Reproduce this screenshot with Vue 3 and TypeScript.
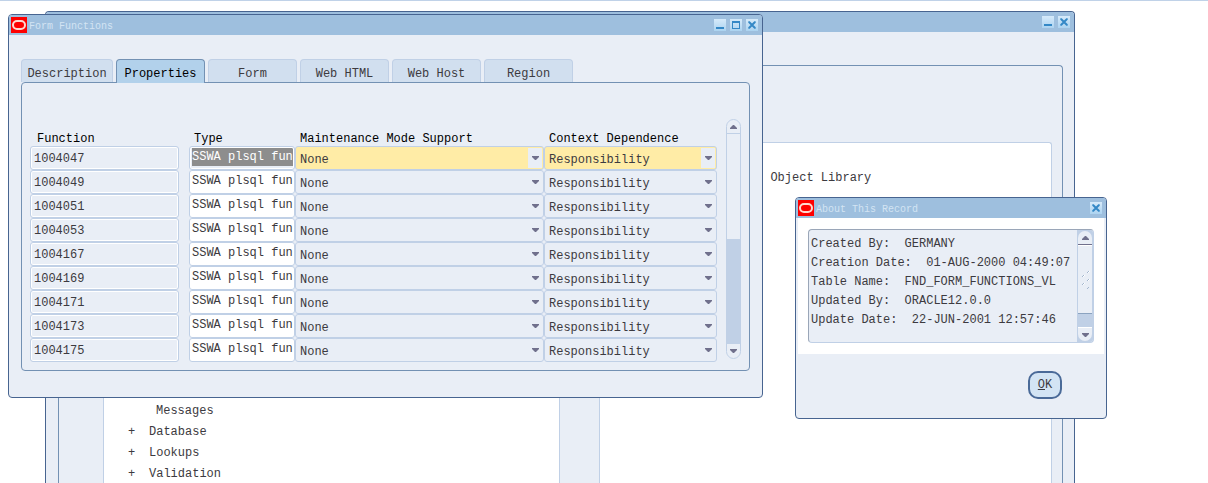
<script setup lang="ts">
import { ref } from 'vue'

interface FunctionRow {
  id: string
  type: string
  maintenance: string
  context: string
}

const tabs: string[] = ['Description', 'Properties', 'Form', 'Web HTML', 'Web Host', 'Region']
const activeTab = ref('Properties')

const ids: string[] = [
  '1004047', '1004049', '1004051', '1004053', '1004167',
  '1004169', '1004171', '1004173', '1004175',
]
const rows = ref<FunctionRow[]>(
  ids.map((id) => ({
    id,
    type: 'SSWA plsql function',
    maintenance: 'None',
    context: 'Responsibility',
  })),
)

const treeItems: { label: string; branch: boolean }[] = [
  { label: 'Messages', branch: false },
  { label: 'Database', branch: true },
  { label: 'Lookups', branch: true },
  { label: 'Validation', branch: true },
]

const recordInfo: string = [
  'Created By:  GERMANY',
  'Creation Date:  01-AUG-2000 04:49:07',
  'Table Name:  FND_FORM_FUNCTIONS_VL',
  'Updated By:  ORACLE12.0.0',
  'Update Date:  22-JUN-2001 12:57:46',
].join('\n')
</script>

<template>
  <main class="desktop">
    <section class="window navigator" aria-label="Navigator">
      <header class="titlebar">
        <span class="title"></span>
        <button class="winbtn" type="button" aria-label="Minimize">
          <svg viewBox="0 0 12 12"><path d="M2 8h8v2H2z" fill="#3488c6" /></svg>
        </button>
        <button class="winbtn" type="button" aria-label="Close">
          <svg viewBox="0 0 12 12"><path d="M3 3l6 6M9 3l-6 6" stroke="#3488c6" stroke-width="2" fill="none" /><path d="M2 3h2M8 3h2M2 9h2M8 9h2" stroke="#3488c6" fill="none" /></svg>
        </button>
      </header>
      <div class="nav-panel">
        <div class="pane tree-pane">
          <ul class="tree">
            <li v-for="item in treeItems" :key="item.label" :class="{ leaf: !item.branch }">
              <span v-if="item.branch" class="plus">+</span>{{ item.label }}
            </li>
          </ul>
        </div>
        <div class="pane detail-pane">Application Object Library</div>
      </div>
    </section>

    <section class="window functions" aria-label="Form Functions">
      <header class="titlebar">
        <svg class="logo" viewBox="0 0 16 16">
          <rect width="16" height="16" fill="#fe0000" />
          <rect x="2" y="4" width="12" height="8" rx="4" fill="none" stroke="#ffd8d0" stroke-width="2" />
        </svg>
        <span class="title">Form Functions</span>
        <button class="winbtn" type="button" aria-label="Minimize">
          <svg viewBox="0 0 12 12"><path d="M2 8h8v2H2z" fill="#3488c6" /></svg>
        </button>
        <button class="winbtn" type="button" aria-label="Maximize">
          <svg viewBox="0 0 12 12"><path d="M2 2h8v8H2zM3 4v5h6V4z" fill="#3488c6" fill-rule="evenodd" /></svg>
        </button>
        <button class="winbtn" type="button" aria-label="Close">
          <svg viewBox="0 0 12 12"><path d="M3 3l6 6M9 3l-6 6" stroke="#3488c6" stroke-width="2" fill="none" /><path d="M2 3h2M8 3h2M2 9h2M8 9h2" stroke="#3488c6" fill="none" /></svg>
        </button>
      </header>

      <div class="body">
        <nav class="tabs" role="tablist">
          <button
            v-for="tab in tabs"
            :key="tab"
            type="button"
            role="tab"
            class="tab"
            :class="{ active: tab === activeTab }"
            :aria-selected="tab === activeTab"
            @click="activeTab = tab"
          >{{ tab }}</button>
        </nav>

        <div class="panel">
          <table class="grid">
            <colgroup>
              <col class="c-function" />
              <col class="c-type" />
              <col />
              <col class="c-context" />
            </colgroup>
            <thead>
              <tr>
                <th class="h-function">Function</th>
                <th>Type</th>
                <th>Maintenance Mode Support</th>
                <th>Context Dependence</th>
              </tr>
            </thead>
            <tbody>
              <tr v-for="(row, i) in rows" :key="row.id" :class="{ current: i === 0 }">
                <td class="d-function">
                  <input class="cell fn" type="text" readonly :value="row.id" aria-label="Function" />
                </td>
                <td>
                  <input v-model="row.type" class="cell type" type="text" aria-label="Type" />
                </td>
                <td>
                  <div class="cell combo">
                    <select v-model="row.maintenance" aria-label="Maintenance Mode Support">
                      <option>None</option>
                    </select>
                    <span class="drop"><svg viewBox="0 0 7 4"><path d="M0 0h7v1L4 4H3L0 1z" fill="#70708c" /></svg></span>
                  </div>
                </td>
                <td>
                  <div class="cell combo">
                    <select v-model="row.context" aria-label="Context Dependence">
                      <option>Responsibility</option>
                    </select>
                    <span class="drop"><svg viewBox="0 0 7 4"><path d="M0 0h7v1L4 4H3L0 1z" fill="#70708c" /></svg></span>
                  </div>
                </td>
              </tr>
            </tbody>
          </table>
          <div class="scroll">
            <button type="button" class="up" aria-label="Scroll up">
              <svg viewBox="0 0 7 4"><path d="M0 4V3L3 0h1l3 3v1z" fill="#70708c" /></svg>
            </button>
            <div class="thumb"></div>
            <div class="track"></div>
            <button type="button" class="down" aria-label="Scroll down">
              <svg viewBox="0 0 7 4"><path d="M0 0h7v1L4 4H3L0 1z" fill="#70708c" /></svg>
            </button>
          </div>
        </div>
      </div>
    </section>

    <section class="window about" role="dialog" aria-label="About This Record">
      <header class="titlebar">
        <svg class="logo" viewBox="0 0 16 16">
          <rect width="16" height="16" fill="#fe0000" />
          <rect x="2" y="4" width="12" height="8" rx="4" fill="none" stroke="#ffd8d0" stroke-width="2" />
        </svg>
        <span class="title">About This Record</span>
        <button class="winbtn" type="button" aria-label="Close">
          <svg viewBox="0 0 12 12"><path d="M3 3l6 6M9 3l-6 6" stroke="#3488c6" stroke-width="2" fill="none" /><path d="M2 3h2M8 3h2M2 9h2M8 9h2" stroke="#3488c6" fill="none" /></svg>
        </button>
      </header>
      <div class="message">
        <div class="record">
          <textarea readonly rows="5" aria-label="Record details" :value="recordInfo"></textarea>
          <div class="record-scroll">
            <button type="button" class="up" aria-label="Scroll up">
              <svg viewBox="0 0 7 4"><path d="M0 4V3L3 0h1l3 3v1z" fill="#70708c" /></svg>
            </button>
            <div class="thumb">
              <svg class="grip" viewBox="0 0 9 19">
                <path d="M6 3l2-2M1 7l2-2M6 11l2-2M1 15l2-2M6 19l2-2" stroke="#a3b6ce" fill="none" />
                <path d="M7 3l2-2M2 7l2-2M7 11l2-2M2 15l2-2" stroke="#ffffff" fill="none" />
              </svg>
            </div>
            <div class="track"></div>
            <button type="button" class="down" aria-label="Scroll down">
              <svg viewBox="0 0 7 4"><path d="M0 0h7v1L4 4H3L0 1z" fill="#70708c" /></svg>
            </button>
          </div>
        </div>
      </div>
      <footer class="actions">
        <button type="button" class="ok"><u>O</u>K</button>
      </footer>
    </section>
  </main>
</template>

<style>
body {
  margin: 0;
  background: #ffffff;
}
</style>

<style scoped>
.desktop {
  position: relative;
  box-sizing: border-box;
  min-height: 100vh;
  overflow: hidden;
  border-top: 1px solid #c0d2e8;
  background: #ffffff;
  color: #3c3a40;
  font: 12px/16px "Liberation Mono", monospace;
}

button,
input,
select,
textarea {
  box-sizing: border-box;
  margin: 0;
  padding: 0;
  border: 0;
  border-radius: 0;
  outline: 0;
  background: transparent;
  color: inherit;
  font: inherit;
}

svg {
  display: block;
}

.window {
  position: absolute;
  box-sizing: border-box;
  border: 1px solid #476490;
  border-radius: 4px;
  background: #e9eef6;
  overflow: hidden;
}

.navigator {
  top: 10px;
  right: 133px;
  bottom: 0;
  left: 45px;
  display: flex;
  flex-direction: column;
  border-bottom: 0;
  border-radius: 4px 4px 0 0;
}

.functions {
  top: 13px;
  right: 445px;
  left: 8px;
}

.about {
  top: 196px;
  right: 101px;
  width: 312px;
}

.titlebar {
  display: flex;
  align-items: center;
  flex: none;
  box-sizing: border-box;
  height: 20px;
  gap: 4px;
  padding: 0 4px 0 2px;
  background: #9ebfde;
}

.logo {
  flex: none;
  width: 16px;
  height: 16px;
}

.title {
  flex: 1;
  margin-left: -2px;
  padding-top: 4px;
  color: #d3e4f3;
  font-size: 10px;
}

.winbtn {
  width: 12px;
  height: 12px;
  background: linear-gradient(#d6eafa, #acd3f0);
}

.nav-panel {
  display: grid;
  flex: 1;
  grid-template-columns: 457fr 453fr;
  gap: 39px;
  box-sizing: border-box;
  margin: 33px 11px 0 12px;
  padding: 76px 10px 0 44px;
  border: 1px solid #7391b3;
  border-bottom: 0;
  border-radius: 4px 4px 0 0;
}

.pane {
  box-sizing: border-box;
  min-width: 0;
  border: 1px solid #c0d0e6;
  border-bottom: 0;
  border-radius: 3px 3px 0 0;
  background: #ffffff;
}

.tree-pane {
  padding: 258px 0 0 24px;
}

.detail-pane {
  padding: 27px 0 0 84px;
}

.tree {
  margin: 0;
  padding: 0;
  list-style: none;
  line-height: 21px;
}

.tree li {
  display: flex;
}

.tree .leaf {
  padding-left: 28px;
}

.plus {
  width: 21px;
}

.body {
  padding: 24px 12px 26px;
}

.tabs {
  display: flex;
  gap: 3px;
}

.tab {
  flex: none;
  width: 89px;
  height: 23px;
  padding-top: 5px;
  border: 1px solid #c0d0e6;
  border-bottom: 0;
  border-radius: 4px 4px 0 0;
  background: #d1dfef;
}

.tab:first-child {
  width: 92px;
}

.tab.active {
  z-index: 1;
  height: 24px;
  margin-bottom: -1px;
  padding-top: 4px;
  border-color: #7391b3;
  background: #b2d1eb;
  color: #000000;
}

.panel {
  display: flex;
  gap: 9px;
  padding: 36px 8px 8px;
  border: 1px solid #7391b3;
  border-radius: 4px;
}

.grid {
  flex: 1;
  margin-top: 11px;
  border-collapse: collapse;
  table-layout: fixed;
}

.c-function {
  width: 159px;
}

.c-type {
  width: 106px;
}

.c-context {
  width: 173px;
}

.grid th {
  height: 14px;
  padding: 2px 0 0 5px;
  color: #000000;
  font-weight: normal;
  line-height: 14px;
  text-align: left;
  white-space: nowrap;
}

.grid .h-function {
  padding-left: 7px;
}

.grid td {
  height: 24px;
  padding: 0;
}

.grid .d-function {
  padding-right: 10px;
}

.cell {
  display: flex;
  box-sizing: border-box;
  width: 100%;
  height: 24px;
  border: 1px solid #c0d0e6;
  border-radius: 3px;
}

.fn {
  padding: 1px 3px 0;
  box-shadow: inset 0 0 0 1px #ffffff;
}

.type {
  padding: 1px 1px 3px 2px;
  background: #ffffff;
  line-height: 18px;
}

.current .type {
  background: #8d8d8d content-box;
  box-shadow: inset 0 0 0 1px #ffffff;
  color: #ffffff;
}

.combo {
  padding: 1px;
}

.combo select {
  flex: 1;
  min-width: 0;
  padding: 3px 0 0 3px;
  appearance: none;
}

.current .combo {
  background: #ffeca6;
}

.drop {
  display: flex;
  align-items: center;
  justify-content: center;
  width: 14px;
  background: #e9eef6;
}

.drop svg,
.up svg,
.down svg {
  width: 7px;
  height: 4px;
}

.scroll {
  display: flex;
  flex-direction: column;
  box-sizing: border-box;
  width: 15px;
  margin-bottom: 3px;
  border: 1px solid #c0d0e6;
  border-radius: 8px;
  overflow: hidden;
}

.up,
.down {
  display: flex;
  align-items: center;
  justify-content: center;
  flex: none;
  height: 14px;
}

.scroll .up {
  border-bottom: 1px solid #c0d0e6;
}

.scroll .thumb,
.scroll .track {
  flex: 1;
}

.track {
  background: #c0d0e6;
}

.message {
  margin: 0 2px;
  padding: 11px 10px;
  background: #ffffff;
}

.record {
  display: flex;
  box-sizing: border-box;
  border: 1px solid #c0d0e6;
  border-top-color: #9aa6b8;
  border-left-color: #9aa6b8;
  border-radius: 4px;
  background: #e9eef6;
  overflow: hidden;
}

.record textarea {
  flex: 1;
  min-width: 0;
  height: 112px;
  padding: 5px 0 0 2px;
  line-height: 19px;
  white-space: pre;
  overflow: hidden;
  resize: none;
}

.record-scroll {
  display: flex;
  flex-direction: column;
  width: 14px;
  padding: 1px;
  background: #c0d0e6;
}

.record-scroll .up {
  border-bottom: 1px solid #70708c;
  border-radius: 7px 7px 0 0;
  background: #e9eef6;
}

.record-scroll .down {
  border-top: 1px solid #ffffff;
  border-radius: 0 0 7px 7px;
  background: #e9eef6;
}

.record-scroll .thumb {
  display: flex;
  align-items: center;
  justify-content: center;
  flex: 5;
  border-top: 1px solid #ffffff;
  border-bottom: 1px solid #8ba3c0;
  background: #e9eef6;
}

.grip {
  width: 9px;
  height: 19px;
}

.record-scroll .track {
  flex: 1;
}

.actions {
  display: flex;
  justify-content: flex-end;
  padding: 17px 44px 19px;
}

.ok {
  width: 34px;
  height: 28px;
  border: 2px solid #4a6a98;
  border-radius: 10px;
  background: #d3e4f4;
}
</style>
